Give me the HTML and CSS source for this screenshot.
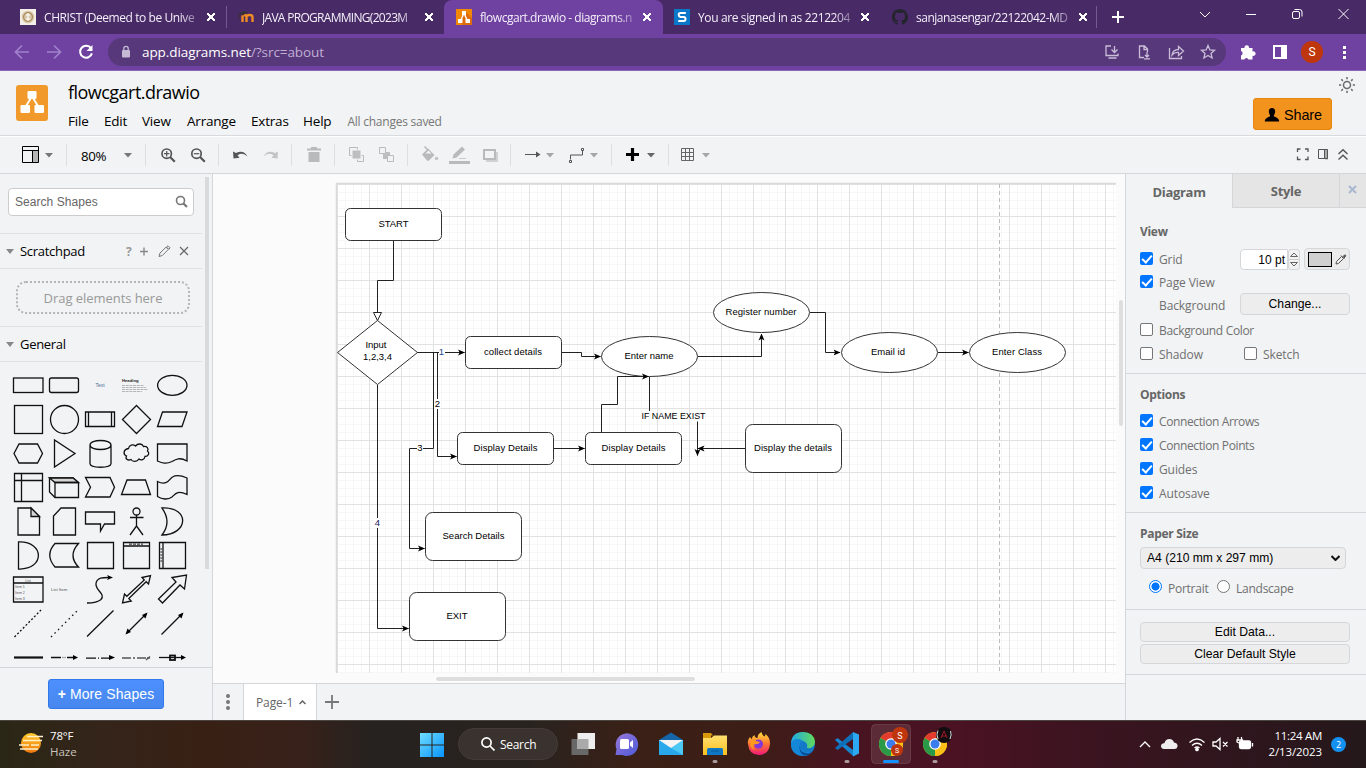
FILE: index.html
```html
<!DOCTYPE html>
<html lang="en">
<head>
<meta charset="utf-8">
<title>flowcgart.drawio - diagrams.net</title>
<link rel="stylesheet" href="styles.css">
</head>
<body>
<header class="tabs">
  <div class="tab first"><svg width="16" height="16" viewBox="0 0 16 16"><rect width="16" height="16" fill="#f4efe6"/><circle cx="8" cy="8" r="6.3" fill="#d9c9ac"/><circle cx="8" cy="8" r="4.4" fill="none" stroke="#a98c58" stroke-width="1.2"/><path d="M8 4v8M6 6h4M6 10h4" stroke="#fff"/></svg><span class="ttl t1">CHRIST (Deemed to be Unive</span><i class="x"></i></div>
  <div class="tab sep"><svg width="16" height="16" viewBox="0 0 16 16"><path d="M4.500 13V8q0-2 2-2t2 2v5M8.500 13V8q0-2 3-2t3 2v5" fill="none" stroke="#f08a24" stroke-width="2.400"/><path d="M0 5l6-3 4 1-5 3.500z" fill="#3a3038"/><path d="M.8 5v5" stroke="#3a3038"/></svg><span class="ttl t2">JAVA PROGRAMMING(2023M</span><i class="x"></i></div>
  <div class="tab active"><svg width="16" height="16" viewBox="0 0 16 16"><rect width="16" height="16" fill="#f08705"/><path d="M9 2l7 7v7H7l-4-4z" fill="#df6c0c"/><path d="M8 4L4.500 12M8 4l3.500 8" stroke="#fff" stroke-width="1.400"/><path d="M6 2h4v4H6zM2 10h4.500v4H2zM9.500 10H14v4H9.500z" fill="#fff"/></svg><span class="ttl t3">flowcgart.drawio - diagrams.n</span><i class="x"></i></div>
  <div class="tab signed"><svg width="16" height="16" viewBox="0 0 16 16"><rect width="16" height="16" fill="#0a78c8"/><path d="M11.800 4H6.500Q4.700 4 4.700 5.800T6.500 7.900h3.200q1.800 0 1.800 2T9.700 12H4.200" fill="none" stroke="#fff" stroke-width="2"/></svg><span class="ttl t4">You are signed in as 2212204</span><i class="x"></i></div>
  <div class="tab sep"><svg width="16" height="16" viewBox="0 0 16 16"><path fill="#24242c" d="M8 0C3.600 0 0 3.600 0 8c0 3.500 2.300 6.500 5.500 7.600.4.100.5-.2.500-.4v-1.400c-2.200.5-2.700-1-2.700-1-.4-.9-.9-1.200-.9-1.200-.7-.5.100-.5.100-.5.800.1 1.200.8 1.200.8.700 1.200 1.900.9 2.300.7.100-.5.300-.9.500-1.100-1.800-.2-3.600-.9-3.600-4 0-.9.300-1.600.8-2.200-.1-.2-.4-1 .1-2.100 0 0 .7-.2 2.200.8a7.600 7.600 0 0 1 4 0c1.500-1 2.200-.8 2.200-.8.400 1.100.2 1.900.1 2.100.5.600.8 1.300.8 2.200 0 3.100-1.900 3.700-3.700 3.900.3.300.6.800.6 1.500v2.200c0 .2.100.5.500.4C13.700 14.500 16 11.500 16 8c0-4.400-3.600-8-8-8z"/></svg><span class="ttl t5">sanjanasengar/22122042-MD</span><i class="x"></i></div>
  <div class="newtab"><svg width="24" height="34" viewBox="1107 0 24 34"><path d="M1113 17h12M1119 11v12" stroke="#fff" stroke-width="2"/></svg></div>
  <svg class="winctl" width="180" height="34" viewBox="1186 0 180 34" fill="none" stroke="#fff" stroke-width="1"><path d="M1200 12l5 5 5-5M1246 14.500h10M1338.500 9l10 10M1348.500 9l-10 10"/><rect x="1292.500" y="11.500" width="7" height="7" rx="1.500"/><path d="M1294.500 9.500h5a2.500 2.500 0 0 1 2.500 2.500v4.500"/></svg>
</header>
<nav class="address">
  <svg width="108" height="36" viewBox="0 34 108 36" fill="none" stroke-width="1.700"><path d="M29 52H16M22 45.500L15.500 52l6.500 6.500M47 52h13M54 45.500l6.500 6.500-6.500 6.500" stroke="#a182cd"/><path d="M91 48.200a6 6 0 1 0 .9 5.200" stroke="#fff" stroke-width="2"/><path d="M92.500 45v6h-6z" fill="#fff"/></svg>
  <div class="omni"><svg width="10" height="14" viewBox="0 0 10 14"><rect x="1" y="5" width="8" height="7.500" rx="1" fill="#c5b9d6"/><path d="M2.800 5V3.500a2.200 2.200 0 0 1 4.400 0V5" fill="none" stroke="#c5b9d6" stroke-width="1.300"/></svg><span class="url"><b>app.diagrams.net</b>/?src=about</span>
  <svg class="omniend" width="126" height="28" viewBox="1100 38 126 28" fill="none" stroke="#c9bdd8" stroke-width="1.300"><path d="M1111 46h-5v9.500h12v-2M1114.500 46v6M1111.500 49.500l3 3 3-3M1108.500 58h8"/><path d="M1144 57.500h-4.500v-11.500h5l3 3v3M1144 46v3.500h3.500M1147 52v4.500M1145 55l2 2 2-2M1144 58.800h6"/><path d="M1169.500 48v10.500h12V56M1172 55q1-5.500 6.500-5.500v-3l5 4.500-5 4.500v-3q-4-.3-6.500 2.500z"/><path d="M1208 45.500l1.900 4.400 4.600.4-3.500 3.100 1.100 4.600-4.100-2.500-4.100 2.500 1.100-4.600-3.500-3.100 4.600-.4z"/></svg></div>
  <svg width="140" height="36" viewBox="1226 34 140 36"><path d="M1241 48h3.500a2.300 2.300 0 1 1 4.500 0h3.500v3.500a2.300 2.300 0 1 1 0 4.300v3.700h-4a2.200 2.200 0 0 0-4.200 0H1241v-4a2.300 2.300 0 0 0 0-4.400z" fill="#fff"/><path d="M1274 46h12v12h-12z" fill="none" stroke="#fff" stroke-width="2"/><path d="M1281 46h6v13h-6z" fill="#fff"/><circle cx="1312" cy="52" r="11" fill="#bf360c"/><text x="1312" y="56.300" class="av">S</text><path d="M1343 46h3v3h-3zM1343 51h3v3h-3zM1343 56h3v3h-3z" fill="#fff"/></svg>
</nav>
<section class="apphead">
  <svg class="logo" width="32" height="36" viewBox="0 0 32 36"><rect width="32" height="36" rx="3" fill="#f2992c"/><path d="M15.500 12L9.500 22M16.500 12l6 10" stroke="#fff" stroke-width="2"/><rect x="11.500" y="6" width="9" height="8" rx="1.200" fill="#fff"/><rect x="4.500" y="20" width="9.500" height="8" rx="1.200" fill="#fff"/><rect x="18.500" y="20" width="9.500" height="8" rx="1.200" fill="#fff"/></svg>
  <div class="headmid"><div class="fname">flowcgart.drawio</div><div class="menu"><span>File</span><span>Edit</span><span>View</span><span>Arrange</span><span>Extras</span><span>Help</span><span class="status">All changes saved</span></div></div>
  <div class="share"><svg width="16" height="16" viewBox="0 0 16 16"><path d="M8 1c2 0 3.200 1.400 3.200 3.300S10 8.300 9.800 9c0 1 5.400 1.200 5.400 5.500H.8C.8 10.200 6.200 10 6.200 9c-.2-.7-1.400-2.800-1.400-4.700S6 1 8 1z"/></svg>Share</div>
  <svg class="sun" width="18" height="18" viewBox="-9 -9 18 18" fill="none" stroke="#6b6b6b" stroke-width="1.500"><circle r="3.500"/><path d="M0-5.800v-2.200M0 5.800V8M-5.800 0H-8M5.800 0H8M4.100-4.100l1.600-1.600M-4.100-4.100l-1.600-1.600M4.100 4.100l1.600 1.600M-4.100 4.100l-1.600 1.600"/></svg>
</section>
<section class="toolbar">
  <div class="grp"><svg width="66" height="36" viewBox="0 137 66 36"><path d="M33 150h5.500v12H33z" fill="#b5b5b5"/><path d="M22.500 146.500h16v16h-16zM22.500 150.500h16M32.500 150.500v12" fill="none" stroke="#000"/><path d="M45 153h8l-4 4.500z" fill="#777"/></svg></div>
  <div class="grp zoomg"><span>80%</span><svg width="8" height="5" viewBox="0 0 8 5"><path d="M0 0h8L4 4.500z" fill="#777"/></svg></div>
  <div class="grp"><svg width="72" height="36" viewBox="146 137 72 36" fill="none" stroke="#555" stroke-width="1.700"><circle cx="166.700" cy="153.700" r="4.700"/><path d="M170 157l4.800 4.800" stroke-width="2.200"/><path d="M164 153.700h5.400M166.700 151v5.400" stroke-width="1.200"/><circle cx="196.500" cy="153.700" r="4.700"/><path d="M200 157l4.800 4.800" stroke-width="2.200"/><path d="M193.800 153.700h5.400" stroke-width="1.200"/></svg></div>
  <div class="grp"><svg width="72" height="36" viewBox="219 137 72 36"><path d="M233 151.500l.5 7 6-.8-2-2.500q5.500-3.500 10 1.300-3.500-7-11.500-3.500z" fill="#555"/><path d="M278 151.500l-.5 7-6-.8 2-2.500q-5.500-3.500-10 1.300 3.500-7 11.500-3.500z" fill="#c3c4c6"/></svg></div>
  <div class="grp"><svg width="42" height="36" viewBox="292 137 42 36" fill="#b9babc"><path d="M307 148.500h4v-1.500h6v1.500h4v2h-14zM308.500 152h11v10h-11z"/></svg></div>
  <div class="grp"><svg width="72" height="36" viewBox="335 137 72 36"><path d="M349.500 147.500h8v8h-8zM357.500 155.500h6v6h-6z" fill="none" stroke="#b9babc"/><path d="M352 150h9v9h-9z" fill="#bdbec0" stroke="#f1f3f4"/><path d="M383 152h7v7h-7z" fill="#bdbec0"/><path d="M379.500 147.500h6v6h-6zM387.500 155.500h6v6h-6z" fill="#f1f3f4" stroke="#b9babc"/></svg></div>
  <div class="grp"><svg width="102" height="36" viewBox="408 137 102 36"><path d="M422 154.500l6-6 6.500 6.500-5.500 5.500q-1 .5-2 0z" fill="#b9babc"/><path d="M424.500 146.500l5 5" stroke="#b9babc" stroke-width="1.500"/><path d="M425.500 153.500l3-3 3 3z" fill="#f1f3f4"/><circle cx="436.500" cy="158.500" r="1.800" fill="#c3c4c6"/><path d="M452.500 158.500l1-4 8.500-8 3 3-8.500 8z" fill="#b9babc"/><path d="M459 158.500h7" stroke="#c8c9cb"/><path d="M449 161h21v3h-21z" fill="#b9babc"/><path d="M486 152h12v10h-12z" fill="#d0d1d3"/><path d="M484 150h11v9h-11z" fill="#f1f3f4" stroke="#b9babc" stroke-width="2"/></svg></div>
  <div class="grp"><svg width="100" height="36" viewBox="511 137 100 36"><path d="M525 154.500h12" stroke="#555"/><path d="M536 151.500l4.500 3-4.500 3z" fill="#555"/><path d="M546 153h8l-4 4.500zM590 153h8l-4 4.500z" fill="#a5a6a8"/><path d="M570.500 159.500v-4.500h12v-4M569.500 160.500h2v2h-2zM581.500 148.500h2v2h-2z" fill="none" stroke="#555"/></svg></div>
  <div class="grp"><svg width="56" height="36" viewBox="612 137 56 36"><path d="M626 154.500h13M632.500 148v13" stroke="#000" stroke-width="3.200"/><path d="M647 153h8l-4 4.500z" fill="#666"/></svg></div>
  <div class="grp last"><svg width="50" height="36" viewBox="669 137 50 36"><path d="M681.500 148.500h12v12h-12zM685.500 148.500v12M689.500 148.500v12M681.500 152.500h12M681.500 156.500h12" fill="none" stroke="#666"/><path d="M702 153h8l-4 4.500z" fill="#a5a6a8"/></svg></div>
  <svg class="right" width="76" height="36" viewBox="1290 137 76 36" fill="none" stroke="#555"><path d="M1297.500 152v-3h3M1305 149h3v3M1308 156.500v3h-3M1300.500 159.500h-3v-3" stroke-width="1.300"/><path d="M1325 149.500h3v10h-3z" fill="#aaa" stroke="none"/><path d="M1318.500 149.500h9v9h-9zM1324.500 149.500v9"/><path d="M1338.500 154l4.500-4.300 4.500 4.300M1338.500 159.500l4.500-4.300 4.500 4.300" stroke-width="1.400"/></svg>
</section>
<main class="main">
  <aside class="side">
    <div class="scroll">
      <div class="searchwrap"><div class="search">Search Shapes<svg width="14" height="14" viewBox="0 0 14 14" fill="none" stroke="#777"><circle cx="5.500" cy="5.500" r="4" stroke-width="1.600"/><path d="M8.500 8.500l3.500 3.500" stroke-width="2.200"/></svg></div></div>
      <div class="sect"><i class="tri"></i><span class="sc">Scratchpad</span><svg width="70" height="20" viewBox="122 241 70 20" fill="none" stroke="#888"><text x="126" y="256" class="qm">?</text><path d="M140 251.500h8M144 247.500v8" stroke-width="1.400"/><path d="M159 256.500l1-3.500 6-5.800 2.300 2.300-6 6zM166.500 247l1.500-1.200 2 2-1.200 1.500z" stroke="#777"/><path d="M180 247l8 8M188 247l-8 8" stroke="#666" stroke-width="1.200"/></svg></div>
      <div class="dragwrap"><div class="drag"><svg width="174" height="33" viewBox="0 0 174 33"><rect x="1" y="1" width="172" height="31" rx="9" fill="none" stroke="#b4b5b6" stroke-width="2" stroke-dasharray="2 2"/></svg><span>Drag elements here</span></div></div>
      <div class="sect"><i class="tri"></i><span class="sg">General</span></div>
      <div class="shapes">
        <svg><rect x="3.500" y="10" width="29.500" height="14.500"/></svg>
        <svg><rect x="3.500" y="10" width="29" height="14.500" rx="2"/></svg>
        <svg><text x="18" y="19" class="tiny mid blue">Text</text></svg>
        <svg><text x="4" y="13.500" class="tiny head">Heading</text><path d="M4 17.500h22M4 19.500h24M4 21.500h26M4 23.500h20" stroke="#999" stroke-width=".7" stroke-dasharray="3 .7"/></svg>
        <svg><ellipse cx="18.300" cy="17.300" rx="14.700" ry="10"/></svg>
        <svg><rect x="4.500" y="3.500" width="28" height="28"/></svg>
        <svg><circle cx="18.500" cy="17.500" r="14"/></svg>
        <svg><path d="M3.500 10h29v14.500h-29zM6.500 10v14.500M29.500 10v14.500"/></svg>
        <svg><path d="M18.500 3.500l14 14-14 14-14-14z"/></svg>
        <svg><path d="M8.500 10H33l-5 14.500H3.500z"/></svg>
        <svg><path d="M9 8h18.500l5 9.500-5 9.500H9l-5-9.500z"/></svg>
        <svg><path d="M8.500 4v27L29 17.500z"/></svg>
        <svg><path d="M8 9v18.500c0 5 21 5 21 0V9M8 9c0-6 21-6 21 0s-21 6-21 0z"/></svg>
        <svg><path d="M10.500 12.500c.5-3.500 4.500-4.500 7-2.500 2.500-3 6.500-2.500 8 .5 3.500-.5 5.500 2 4 4.500 2.500 2 1 5.500-2.500 5.500-.5 3.500-4 4-6 2.500-2 3-6.500 3-8 .5-3.500 1.500-6-1-4.500-3.500-3.500-1.500-3.500-6.500 2-7.500z"/></svg>
        <svg><path d="M3.500 8H33v17c-7-4-11-2-15 .5-6 3-10 1.500-14.500-.5z"/></svg>
        <svg><path d="M4.500 3.500h28v28h-28zM11.500 3.500v28M4.500 10.500h28"/></svg>
        <svg><path d="M3.500 8H27l5.500 4.500v15H9L3.500 22z"/><path d="M3.500 8H27l5.500 4.500H9z" class="shade"/><path d="M9 27.500V12.500h23.500"/></svg>
        <svg><path d="M3.500 7.500H28l4.500 9.700L28 27H3.500l5-9.800z"/></svg>
        <svg><path d="M9 10h18.500l5 14.500H3.500z"/></svg>
        <svg><path d="M3.500 11.500c10 5 12-3 15-4.500 5-3 10-1 14.500 1v16.500c-10-5-12 0-15 2.500-4 3-10 2.500-14.500-.5z"/></svg>
        <svg><path d="M8 4h13l8.500 8.500V31H8z"/><path d="M21 4v8.500h8.500z" class="shade"/></svg>
        <svg><path d="M15 4h14.500v27H7.500V12z"/></svg>
        <svg><path d="M3.500 8h29v12h-10l-4 7v-7h-15z"/></svg>
        <svg><circle cx="18.500" cy="7.500" r="3.500"/><path d="M18.500 11v11M12 13.500h13.500M18.500 22L12 31M18.500 22l6.500 9"/></svg>
        <svg><path d="M8 4c29-1 26 27 0 27q10-13 0-27z"/></svg>
        <svg><path d="M8.500 4v27C35 32 35 3 8.500 4z"/></svg>
        <svg><path d="M9 5.500h23.500q-11 12 0 23.500H9Q-1.500 17 9 5.500z"/></svg>
        <svg><path d="M5.500 4.500H31.500v26h-26z"/></svg>
        <svg><path d="M5.500 4.500H31.500v26h-26zM5.500 8h26"/><path d="M11 6.200h14" stroke="#444" stroke-dasharray="3 1"/></svg>
        <svg><path d="M5.500 4.500H31.500v26h-26zM9 4.500v26"/><path d="M7.200 10v14" stroke="#666" stroke-dasharray="2 1"/></svg>
        <svg><path d="M3.500 5h29.500v25H3.500zM3.500 11h29.500"/><text x="18" y="9.500" class="micro mid">List</text><text x="5" y="15.500" class="micro">Item 1</text><text x="5" y="21.500" class="micro">Item 2</text><text x="5" y="27.500" class="micro">Item 3</text></svg>
        <svg><text x="5" y="18.500" class="itm">List Item</text></svg>
        <svg><path d="M5 31q10 0 14-3.500c5-6-6-9-5-16C15 5 22 5.500 28 5.500"/><path d="M31 5.500l-6-2.500 1.500 2.500L25 8z" class="fill"/></svg>
        <svg><path d="M4.500 31l2-9 2.300 2.300L26.300 8 24 5.500l8.500-2-2 8.500-2.300-2.300L10.800 26.500l2.400 2.500z"/></svg>
        <svg><path d="M4.500 27L22 10l-4-4.500 14.500-2.500-2 14-4.500-4L8.500 31z"/></svg>
        <svg><path d="M4.500 31L31 4" stroke-dasharray="2 2"/></svg>
        <svg><path d="M5 31L31 5" stroke-dasharray="1.500 3.500"/></svg>
        <svg><path d="M5 30.500L31.500 4.500"/></svg>
        <svg><path d="M9 27L28 8"/><path d="M7.500 28.500l2-6 3.500 3.500zM29.500 6.500l-2 6-3.500-3.500z" class="fill"/></svg>
        <svg><path d="M7.500 28.500L28 8"/><path d="M29.500 6.500l-2 6-3.500-3.500z" class="fill"/></svg>
        <svg><path d="M4 17.500h29" stroke-width="2.200"/></svg>
        <svg><path d="M5 17.500h10M21 17.500h8"/><path d="M16 17.500h4" stroke="#aaa"/><path d="M32 17.500l-5-2.500v5z" class="fill"/></svg>
        <svg><path d="M4 18.200h25" stroke-dasharray="10 2 1 2"/><path d="M33 17.500l-6-2.500v5z" class="fill"/></svg>
        <svg><path d="M4 18h28" stroke="#555" stroke-dasharray="9 2 2 2 9 1"/><path d="M32 16.500l-4 3.500" stroke="#555"/></svg>
        <svg><path d="M5 17.500h24"/><rect x="16" y="15.500" width="5" height="4.500" stroke-width="1.800"/><path d="M32 17.500l-5-2.500v5z" class="fill"/></svg>
      </div>
    </div>
    <div class="more"><button><b>+</b> More Shapes</button></div>
  </aside>
  <section class="work">
    <svg class="canvas" width="912" height="509" viewBox="213 174 912 509">
      <defs>
        <pattern id="g" width="32" height="32" x="337" y="184" patternUnits="userSpaceOnUse"><path d="M8.500 0v32M16.500 0v32M24.500 0v32M0 8.500h32M0 16.500h32M0 24.500h32" stroke="#f7f7f7"/><path d="M.5 0v32M0 .5h32" stroke="#e2e2e2"/></pattern>
        <marker id="a" viewBox="0 0 7 6" refX="6.500" refY="3" markerWidth="7" markerHeight="7" markerUnits="userSpaceOnUse" orient="auto"><path d="M0 0l7 3-7 3 1.700-3z"/></marker>
      </defs>
      <rect x="213" y="174" width="912" height="509" fill="#fbfbfb"/>
      <rect x="337" y="184" width="779" height="489" fill="#fff"/>
      <rect x="337" y="184" width="779" height="489" fill="url(#g)"/>
      <path d="M336.500 673V183.500H1116" stroke="#dadada" stroke-width="1.500" fill="none"/>
      <path d="M999.500 184v489" stroke="#bbb" stroke-dasharray="4 3"/>
      <g class="nodes">
        <rect x="345.500" y="208.500" width="96" height="32" rx="5"/><path d="M377.500 320.500l40 32-40 32-40-32z"/>
        <rect x="465.500" y="336.500" width="96" height="32" rx="5"/><ellipse cx="649.500" cy="356.500" rx="48" ry="20"/><ellipse cx="761.500" cy="312.500" rx="48" ry="20"/><ellipse cx="889.500" cy="352.500" rx="48" ry="20"/><ellipse cx="1017.500" cy="352.500" rx="48" ry="20"/>
        <rect x="457.500" y="432.500" width="96" height="32" rx="5"/><rect x="585.500" y="432.500" width="96" height="32" rx="5"/><rect x="745.500" y="424.500" width="96" height="48" rx="7"/><rect x="425.500" y="512.500" width="96" height="48" rx="7"/><rect x="409.500" y="592.500" width="96" height="48" rx="7"/>
      </g>
      <g class="edges">
        <path d="M393.500 241v39.500h-16V312"/><path d="M373.500 312.500h8l-4 8z" fill="#fff"/>
        <path d="M417.500 352.500h47" marker-end="url(#a)"/><path d="M417.500 352.500h20v104h19" marker-end="url(#a)"/>
        <path d="M417.500 352.500h16v96h-24v100h15" marker-end="url(#a)"/><path d="M377.500 385v243.500h31" marker-end="url(#a)"/>
        <path d="M562 352.500h19.500v4h19" marker-end="url(#a)"/><path d="M698 356.500h63.500V334" marker-end="url(#a)"/><path d="M810 312.500h15.500v40H840" marker-end="url(#a)"/><path d="M938 352.500h30.500" marker-end="url(#a)"/>
        <path d="M554 448.500h30.500" marker-end="url(#a)"/><path d="M601.500 432v-27.500h16v-28h31" marker-end="url(#a)"/><path d="M649.500 377v34"/><path d="M697.500 421.500v34" marker-end="url(#a)"/><path d="M745 448.500h-47" marker-end="url(#a)"/>
      </g>
      <g fill="#fff"><path d="M439 347h6v10h-6zM434.500 399h6v10h-6zM417 443h6v10h-6zM374 518h7v10h-7z"/></g>
      <g class="dt">
        <text x="393.500" y="226.500" textLength="30">START</text><text x="376" y="347.500" textLength="21">Input</text><text x="377.500" y="359.500" textLength="29">1,2,3,4</text><text x="513" y="355" textLength="58">collect details</text><text x="649" y="359" textLength="49">Enter name</text><text x="761" y="315" textLength="71">Register number</text><text x="888" y="355" textLength="34">Email id</text><text x="1017" y="355" textLength="50">Enter Class</text>
        <text x="505.500" y="451" textLength="64">Display Details</text><text x="633.500" y="451" textLength="64">Display Details</text><text x="793" y="451" textLength="78">Display the details</text><text x="473.500" y="539" textLength="62">Search Details</text><text x="457" y="619" textLength="21">EXIT</text><text x="673.500" y="418.500" textLength="64" lengthAdjust="spacingAndGlyphs">IF NAME EXIST</text>
        <text x="441.500" y="355" fill="#1a4a8a">1</text><text x="437.500" y="407">2</text><text x="420" y="451">3</text><text x="377.500" y="526" fill="#202060">4</text>
      </g>
      <rect x="436" y="677" width="259" height="4" rx="2" fill="#dedede"/><rect x="1119" y="300" width="4" height="126" rx="2" fill="#dedede"/>
    </svg>
    <div class="pages"><div class="dots"><svg width="6" height="18" viewBox="0 0 6 18" fill="#777"><circle cx="3" cy="3" r="2"/><circle cx="3" cy="9" r="2"/><circle cx="3" cy="15" r="2"/></svg></div><div class="page"><span>Page-1</span><svg width="7" height="5" viewBox="0 0 7 5"><path d="M.5 4l3-3 3 3" fill="none" stroke="#666" stroke-width="1.500"/></svg></div><svg class="plus" width="14" height="14" viewBox="0 0 14 14"><path d="M0 7h14M7 0v14" stroke="#777" stroke-width="1.800"/></svg></div>
  </section>
  <aside class="fmt">
    <div class="ftabs"><div class="ft on">Diagram</div><div class="ft st">Style</div><div class="ft cl"><svg width="9" height="9" viewBox="0 0 9 9"><path d="M1 1l7 7M8 1L1 8" stroke="#a9b8d0" stroke-width="2"/></svg></div></div>
    <div class="blk view">
      <h3>View</h3>
      <div class="row r1"><i class="cb on"></i><span class="grid">Grid</span><div class="num">10 pt</div><div class="spin"><svg width="10" height="18" viewBox="0 0 10 18"><path d="M1.500 6.500l3.500-3.500 3.500 3.500zM1.500 12.500l3.500 3.500 3.500-3.500z" fill="none" stroke="#666"/><path d="M0 9.500h10" stroke="#ccc"/></svg></div><div class="color"><i></i><svg width="12" height="12" viewBox="0 0 12 12"><path d="M1 11l.5-2.500 5-5 2 2-5 5z" fill="none" stroke="#555"/><path d="M6 2.500l3.500 3.500M8 3.500l1.500-1.500q1-.3 1.200.3t-.2 1.200L9 5" stroke="#555" fill="#555"/></svg></div></div>
      <div class="row r2"><i class="cb on"></i><span>Page View</span></div>
      <div class="row r3"><span class="bg">Background</span><div class="btn chg">Change...</div></div>
      <div class="row r4"><i class="cb"></i><span class="bc">Background Color</span></div>
      <div class="row r5"><i class="cb"></i><span class="shw">Shadow</span><i class="cb"></i><span>Sketch</span></div>
    </div>
    <div class="blk opts"><h3>Options</h3>
      <div class="row"><i class="cb on"></i><span class="tight">Connection Arrows</span></div><div class="row"><i class="cb on"></i><span class="tight">Connection Points</span></div><div class="row"><i class="cb on"></i><span>Guides</span></div><div class="row"><i class="cb on"></i><span>Autosave</span></div></div>
    <div class="blk paper"><h3>Paper Size</h3><div class="sel">A4 (210 mm x 297 mm)<svg width="9" height="6" viewBox="0 0 9 6"><path d="M.5 1l4 4 4-4" fill="none" stroke="#111" stroke-width="2"/></svg></div><div class="radios"><i class="rd on"></i><span class="por">Portrait</span><i class="rd"></i><span class="land">Landscape</span></div></div>
    <div class="blk acts"><div class="btn">Edit Data...</div><div class="btn">Clear Default Style</div></div>
  </aside>
</main>
<footer class="task">
  <svg class="wx" width="24" height="24" viewBox="19 730 24 24"><defs><linearGradient id="s" x2="0" y2="1"><stop stop-color="#ffc928"/><stop offset="1" stop-color="#f07810"/></linearGradient></defs><circle cx="31" cy="742" r="10" fill="url(#s)"/><path d="M27 735.500h16M23 739.500h19M19 744h10M31 744h8M20 748h18" stroke="#fff0c8" stroke-width="1.700"/></svg>
  <div class="wtxt"><span>78°F</span><span class="hz">Haze</span></div>
  <svg class="win" width="24" height="24" viewBox="0 0 24 24"><defs><linearGradient id="w" x2="1" y2="1"><stop stop-color="#70dcff"/><stop offset="1" stop-color="#0794ff"/></linearGradient></defs><path d="M0 0h11.500v11.500H0zM12.500 0H24v11.500H12.500zM0 12.500h11.500V24H0zM12.500 12.500H24V24H12.500z" fill="url(#w)"/></svg>
  <div class="srch"><svg width="14" height="14" viewBox="0 0 14 14" fill="none" stroke="#fff" stroke-width="1.700"><circle cx="5.500" cy="5.500" r="4.600"/><path d="M9 9l4.500 4.500"/></svg><span>Search</span></div>
  <svg class="apps" width="390" height="48" viewBox="565 720 390 48">
    <defs><linearGradient id="p" x2="1" y2="1"><stop stop-color="#9a78d8"/><stop offset="1" stop-color="#4a5ad8"/></linearGradient><linearGradient id="fx" x2="0" y2="1"><stop stop-color="#ffe040"/><stop offset=".5" stop-color="#ff7830"/><stop offset="1" stop-color="#f0187a"/></linearGradient><linearGradient id="ed" x2="1"><stop stop-color="#20a8e8"/><stop offset="1" stop-color="#62da58"/></linearGradient><linearGradient id="fo" x2="0" y2="1"><stop stop-color="#ffdf70"/><stop offset="1" stop-color="#fdc020"/></linearGradient>
    <g id="chrome"><circle r="12" fill="#fbc116"/><path d="M0 0L-10.400-6A12 12 0 0 1 10.400-6z" fill="#e33b2e"/><path d="M0 0L-10.400-6A12 12 0 0 0 0 12z" fill="#2b9a48"/><path d="M0-6h10.400A12 12 0 0 1 0 12l5.200-9z" fill="#fbc116"/><circle r="5.800" fill="#fff"/><circle r="4.500" fill="#3b7ded"/></g></defs>
    <rect x="571.500" y="739" width="17" height="16" fill="#686868"/><rect x="577.500" y="733" width="17.500" height="16" fill="#eee"/><rect x="577.500" y="739" width="11" height="10" fill="#aaa"/>
    <path d="M615.500 755l1-6a11.300 11.300 0 1 1 6 6z" fill="url(#p)"/><rect x="620" y="739" width="9" height="10" rx="1.500" fill="#fff"/><path d="M630 742.500l3-2.500v8l-3-2.500z" fill="#fff"/>
    <path d="M659 740l12-7.500 12 7.500v15h-24z" fill="#1565a8"/><path d="M659 740h24v15h-24z" fill="#2aa8ec"/><path d="M671 748l12-8v15z" fill="#4cc8f5"/><path d="M659 740h24l-12 8z" fill="#f4f4f4"/>
    <path d="M703 733h8l2 2.500h-2v4h-8z" fill="#d89a08"/><path d="M703 738h8l3-2.500h13V755h-24z" fill="url(#fo)"/><path d="M707 755v-5.500q0-1.500 1.500-1.500h13q1.500 0 1.500 1.500v5.500z" fill="#0f78c4"/><path d="M711 751h8" stroke="#0a5a98"/>
    <path d="M748 744q-1-4 2-7l1.500 2q1-3 3-4 0 2.500 3 3 0-4 4-6 0 3 3 4.500 1-1 1-2.500 5 4 4.500 10-1 11-11 11t-11-11z" fill="url(#fx)"/><circle cx="758.500" cy="744" r="4.500" fill="#8038d8"/><path d="M752 739q3 0 4 2l4 1q-2 3-5 2-4 3 1 6-6-1-6-7z" fill="#ff9820"/>
    <circle cx="803" cy="744" r="12" fill="#1478c8"/><path d="M791 743q1-11 12-11 11 0 12 10-1 7-8 6 2-6-6-7.500-6-.5-10 2.500z" fill="url(#ed)"/><path d="M791 744q1-5 7-5 3 0 5 2-4 1-3 6 2 6 11 5-3 4-8 4-12-1-12-12z" fill="#1487d8"/><path d="M800 745q-1 7 6 8 4 .5 6-1-4 4-8 3.500-6-3-4-10.500z" fill="#0b4f98"/>
    <path d="M835 740l2.500-2L853 750v6z" fill="#1585d0"/><path d="M835 748l2.500 2L853 739v-7z" fill="#0f70b8"/><path d="M853 732l6 2.500v19l-6 3z" fill="#2da8f2"/>
    <rect x="871.500" y="724.500" width="39" height="39" rx="4" fill="#fff" fill-opacity=".1" stroke="#fff" stroke-opacity=".12"/>
    <use href="#chrome" x="891" y="744"/><circle cx="900" cy="735" r="8" fill="#bf360c"/><text x="900" y="738.500" class="bd">S</text><circle cx="897" cy="750" r="6" fill="#bf360c"/><text x="897" y="752.500" class="bd sm">S</text>
    <use href="#chrome" x="935" y="744"/><circle cx="944" cy="735" r="8" fill="#110d10"/><path d="M938 730.500q-2 4 0 8.500M950.500 731q1.500 4-.5 8" stroke="#ddd" fill="none"/><path d="M941 738l3-7 3 7M942 736h5" stroke="#a01828" fill="none"/>
    <path d="M714 761.500h2M846 761.500h2M934 761.500h2" stroke="#a99a9b" stroke-width="3" stroke-linecap="round"/><path d="M884.500 761.500h13" stroke="#1490ff" stroke-width="3" stroke-linecap="round"/>
  </svg>
  <svg class="tray" width="120" height="48" viewBox="1136 720 120 48" fill="none" stroke="#fff" stroke-width="1.300"><path d="M1140 747l5-5 5 5"/><path d="M1164 749q-3-.5-3-3t3.500-3q1-4 5-4 3.500 0 4.500 3.500 4 .5 3.500 4-.5 2.500-3 2.500z" fill="#eee" stroke="none"/><path d="M1189.500 742.500q7.500-7 15 0M1192 745.500q5-4.500 10 0M1194.500 748q2.500-2 5 0"/><circle cx="1197" cy="749.500" r="1.200" fill="#fff"/><path d="M1213 742h3l4-3.500v11l-4-3.500h-3zM1223 742l4.500 4.500M1227.500 742l-4.500 4.500"/><rect x="1239.500" y="741" width="11" height="7.500" rx="1.500" fill="#fff"/><path d="M1252.500 743v3.500M1238 737v3M1241.500 737v3M1237 740h5.500v2q-2.500 2-5.500 0z"/></svg>
  <div class="clock"><span>11:24 AM</span><span class="dtm">2/13/2023</span></div><div class="badge">2</div>
</footer>
</body>
</html>
```
FILE: styles.css
```css
*{box-sizing:border-box}
body{margin:0;width:1366px;height:768px;overflow:hidden;display:flex;flex-direction:column;font-family:"Open Sans","Noto Sans",sans-serif;font-size:12px;color:#000;background:#f1f3f4}
svg{display:block;flex:none}

/* browser chrome */
.tabs{height:34px;background:#472a66;display:flex;flex:none;color:#f3eef8}
.tab{display:flex;align-items:center;width:218px;padding-left:12px;flex:none}
.tab.first{width:227px;padding-left:20px}
.tab.sep{width:217px}
.tab.first,.tab.sep{border-right:1px solid;border-image:linear-gradient(transparent 7px,#75598f 7px,#75598f 27px,transparent 27px) 1}
.tab.active{background:#6f42a1;border-radius:8px 8px 0 0;width:219px}
.tab.sep:nth-child(2){border-right:0;padding-left:11px}
.tab.signed{width:217px;padding-left:11px}
.tab.sep:last-of-type{padding-left:11px}
.ttl{width:157px;margin-left:8px;white-space:nowrap;font-size:12px;letter-spacing:-.45px;-webkit-mask-image:linear-gradient(90deg,#000 136px,#0003 157px);mask-image:linear-gradient(90deg,#000 136px,#0003 157px)}
.t1{letter-spacing:-.42px}.t2{letter-spacing:-.7px}.t3{letter-spacing:-.48px}.t4{letter-spacing:-.38px}.t5{letter-spacing:-.5px}
.x{width:8px;height:8px;margin-left:6px;background:linear-gradient(45deg,transparent 43%,#fff 43%,#fff 57%,transparent 57%),linear-gradient(-45deg,transparent 43%,#fff 43%,#fff 57%,transparent 57%)}
.newtab{width:24px;margin-left:9px}
.winctl{margin-left:auto}
.address{height:37px;background:#6f42a1;border-bottom:1px solid #8a66b4;display:flex;flex:none}
.omni{width:1118px;height:28px;margin-top:4px;border-radius:14px;background:#57387b;display:flex;align-items:center;padding-left:13px;color:#c0aed4}
.url{margin-left:11px;font-size:13.500px;letter-spacing:-.08px}
.url b{font-weight:400;color:#fff}
.omniend{margin-left:auto}
.av{font:12px Roboto,sans-serif;fill:#fff;text-anchor:middle}

/* application header */
.apphead{height:66px;border-bottom:1px solid #fff;box-shadow:inset 0 -1px #d8dadd;display:flex;flex:none;padding-left:16px}
.logo{margin-top:14px}
.headmid{margin-left:20px;width:1185px}
.fname{font-size:18px;line-height:24px;margin-top:9px;letter-spacing:-.53px}
.menu{display:grid;grid-template-columns:36px 38px 45px 64px 52px 44.500px 120px;line-height:20px;margin-top:7px;font-size:13.500px;letter-spacing:-.2px;white-space:nowrap}
.status{font-size:12px;color:#777;line-height:22px;letter-spacing:-.25px}
.share{width:79px;height:32px;margin-top:27px;background:#f2931e;border:1px solid #e8850c;border-radius:3px;display:flex;align-items:center;gap:4px;padding-left:10px;font:14.400px "Liberation Sans",sans-serif;letter-spacing:-.1px;padding-top:1px}
.sun{margin:5px 0 0 6px}
.toolbar{height:37px;border-bottom:1px solid #d4d6d9;display:flex;flex:none}
.grp{display:flex;border-right:1px solid;border-image:linear-gradient(transparent 8px,#dcdee0 8px,#dcdee0 28px,transparent 28px) 1}
.grp.last{border:0}
.zoomg{width:79px;align-items:center;padding-left:14px;font-size:13.300px;letter-spacing:-.4px}
.zoomg span{width:43px;padding-top:2px}
.right{margin-left:auto}

/* shape sidebar */
.main{height:546px;display:flex;flex:none}
.side{width:213px;border-right:1px solid #d4d6d9;display:flex;flex-direction:column}
.scroll{height:493px;overflow:hidden;width:209px;background:linear-gradient(#d8dadc,#d8dadc) 205px 3px/4px 392px no-repeat}
.searchwrap{width:202px;height:60px;border-bottom:1px solid #dfe1e3;padding:14px 0 0 8px}
.search{width:186px;height:28px;border:1px solid #ccc;border-radius:4px;background:#fff;display:flex;align-items:center;justify-content:space-between;padding:0 4px 0 6px;font:12px "Liberation Sans",sans-serif;letter-spacing:.05px;color:#666}
.sect{height:35px;width:202px;border-bottom:1px solid #dfe1e3;display:flex;align-items:center;padding-left:6px;font-size:13px;font-weight:500}
.tri{border:4px solid transparent;border-top:5px solid #888;border-bottom:0;margin-right:6px}
.sc{width:102px;letter-spacing:-.3px}
.sg{letter-spacing:-.3px}
.qm{font:bold 12px "Open Sans",sans-serif;fill:#999;stroke:none}
.dragwrap{width:202px;height:58px;border-bottom:1px solid #dfe1e3;padding:12px 0 0 16px}
.drag{width:174px;height:33px;display:grid;place-items:center;color:#999;font-size:13px;letter-spacing:-.05px}
.drag>*{grid-area:1/1}
.shapes{display:grid;grid-template-columns:repeat(5,36px);grid-auto-rows:34px;padding-left:10px;margin-top:6px}
.shapes svg{width:36px;height:34px;fill:none;stroke:#111;stroke-width:1.300}
.shapes .fill{fill:#000;stroke:none}
.shapes .shade{fill:#d6d6d6}
.shapes text{fill:#555;stroke:none;font-family:"Liberation Sans",sans-serif}
.tiny{font-size:5px}
.mid{text-anchor:middle}
.shapes .blue{fill:#4a6a9a}
.shapes .head{fill:#222;font-weight:bold;font-size:4.200px}
.micro{font-size:3.500px}
.itm{font-size:4.300px}
.more{height:53px;border-top:1px solid #d4d6d9;padding:11px 0 0 48px}
.more button{width:116px;height:30px;border:1px solid #3079ed;border-radius:3px;background:linear-gradient(#4d90fe,#4787ed);color:#fff;font:14px "Liberation Sans",sans-serif;padding:0;white-space:nowrap;letter-spacing:.1px}

/* drawing area */
.work{width:912px}
.nodes{fill:#fff;stroke:#333;stroke-width:1}
.edges{fill:none;stroke:#222;stroke-width:1}
.dt{font:9.500px "Liberation Sans",sans-serif;text-anchor:middle}
.pages{height:37px;border-top:1px solid #d4d6d9;display:flex;align-items:center}
.dots{width:31px;height:100%;border-right:1px solid #d4d6d9;display:flex;align-items:center;justify-content:center}
.page{width:73px;height:100%;background:#fff;border-right:1px solid #d4d6d9;display:flex;align-items:center;padding-left:12px;gap:6px;color:#666;letter-spacing:-.1px}
.plus{margin-left:8px}

/* format panel */
.fmt{width:241px;border-left:1px solid #d4d6d9;color:#707070;white-space:nowrap}
.ftabs{display:flex;height:34px;font-weight:700;font-size:13px;letter-spacing:-.3px}
.ft{display:flex;align-items:center;justify-content:center;color:#666}
.on.ft{width:106px;padding-top:2px}
.st{width:107px;background:#e5e5e5;border:solid #d4d6d9;border-width:0 0 1px 1px}
.cl{width:27px;background:#e5e5e5;border:solid #d4d6d9;border-width:0 0 1px 1px;padding:0 1px 3px 0}
.blk{border-bottom:1px solid #d4d6d9;padding-left:14px}
.blk h3{font-size:12px;font-weight:700;margin:0;line-height:18px;color:#666;letter-spacing:-.3px}
.row{display:flex;align-items:center;height:24px}
.row span,.radios span{margin-left:6px;padding-top:1px;letter-spacing:-.1px}
.row .tight{letter-spacing:-.38px}
.row .bc{letter-spacing:-.33px}
.cb{width:13px;height:13px;border:1px solid #767676;border-radius:2px;background:#fff;flex:none;margin-top:-1px}
.cb.on{border:0;background:#0075ff;display:block}
.cb.on::after{content:"";display:block;width:4px;height:8px;margin:1px 0 0 4px;border:solid #fff;border-width:0 2px 2px 0;transform:rotate(42deg)}
.view{height:166px;padding-top:15px}
.view .r1{margin-top:6px}
.row .grid{width:81px}
.num{width:48px;height:21px;border:1px solid #d4d6d9;border-radius:4px 0 0 4px;background:#fff;color:#000;font:12px/20px "Liberation Sans",sans-serif;text-align:right;padding-right:2px}
.spin{width:12px;height:21px;border:1px solid #d4d6d9;border-radius:3px;background:#f1f1f1;display:grid;place-items:center}
.color{width:46px;height:22px;border:1px solid #d4d6d9;border-radius:4px;background:#ececec;margin-left:4px;display:flex;align-items:center;gap:3px;padding-left:3px}
.color i{width:24px;height:15px;background:#d0d0d0;border:1px solid #000}
.view .r2{height:21px}
.view .r3{height:25px}
.row .bg{margin-left:19px;width:81px}
.btn{height:20px;border:1px solid #d4d6d9;border-radius:4px;background:#ededed;color:#000;font:12.200px/18px "Liberation Sans",sans-serif;text-align:center}
.chg{width:110px;height:22px;line-height:20px;margin-top:-1px}
.view .r4{height:26px}
.view .r5{height:22px}
.row .shw{width:85px}
.opts{height:139px;padding-top:11px}
.opts h3{margin:1px 0 5px}
.paper{height:97px;padding-top:12px}
.sel{width:206px;height:22px;border:1px solid #d4d6d9;border-radius:4px;background:#ededed;color:#000;margin-top:4px;display:flex;align-items:center;justify-content:space-between;padding:0 5px 0 6px;font:12.100px "Liberation Sans",sans-serif}
.radios{display:flex;align-items:center;padding-left:9px;margin-top:9px}
.radios span{padding-top:2px;letter-spacing:-.25px}
.rd{width:13px;height:13px;border:1px solid #767676;border-radius:50%;background:#fff;margin-top:-2px}
.rd.on{border-color:#0075ff;background:radial-gradient(#0075ff 3.800px,#fff 4.300px)}
.radios .por{width:49px}
.acts{padding:12px 16px 9px 14px;height:65px}
.acts .btn+.btn{margin-top:2px}

/* taskbar */
.task{height:48px;border-top:1px solid #4a4540;background:linear-gradient(90deg,#2a2716,#35241a 110px,#382014 200px,#38211a 300px,#26221f 370px,#29231f 530px,#3a2016 630px,#3c1e16 750px,#491421 850px,#4a1223 960px,#3a1420 1100px,#24181b 1366px);display:flex;flex:none;color:#fff}
.wx{margin:10px 0 0 19px}
.wtxt{display:flex;flex-direction:column;margin:7px 0 0 7px;width:370px;font-size:11.500px;line-height:16px;letter-spacing:-.2px}
.hz{color:#c8c3be;letter-spacing:0}
.win{margin-top:12px}
.srch{width:100px;height:32px;margin:7px 0 0 14px;border-radius:16px;background:#3a322f;border:1px solid #443b38;display:flex;align-items:center;padding-left:22px;gap:5px;font-size:12px;letter-spacing:-.3px}
.apps{margin:-1px 0 0 7px}
.bd{font:9px Roboto,sans-serif;fill:#fff;text-anchor:middle}
.sm{font-size:7px}
.tray{margin:-1px 0 0 181px}
.clock{width:66px;text-align:right;display:flex;flex-direction:column;font-size:11.500px;line-height:16px;margin-top:7px;letter-spacing:-.3px}
.dtm{letter-spacing:-.1px}
.badge{width:15px;height:15px;border-radius:50%;background:#1490f0;font-size:9px;line-height:15px;text-align:center;margin:16px 0 0 9px}
```
